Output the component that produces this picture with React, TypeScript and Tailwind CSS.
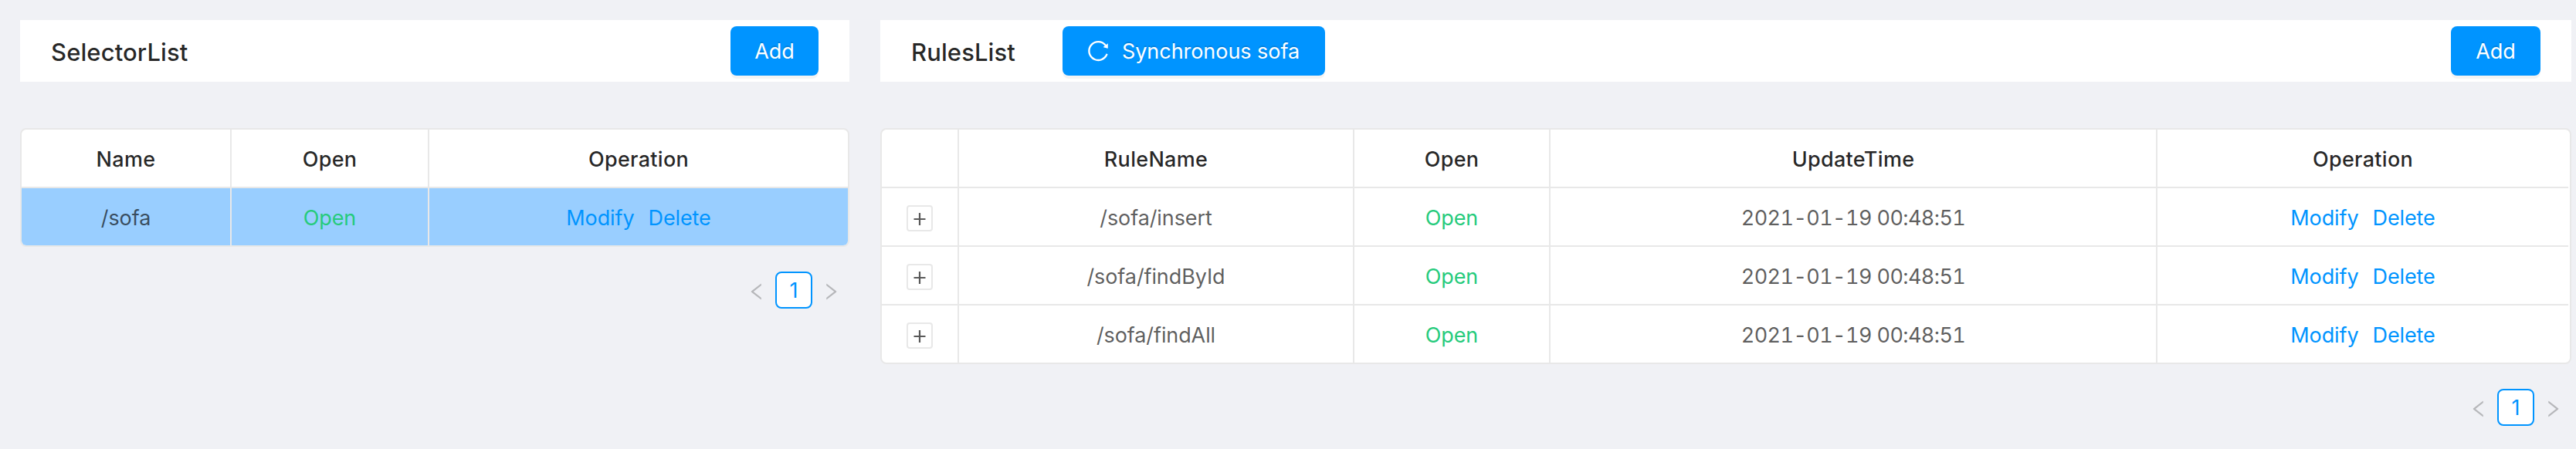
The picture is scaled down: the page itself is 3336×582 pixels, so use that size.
import React from 'react';
import { AiOutlineLeft, AiOutlineReload, AiOutlineRight } from 'react-icons/ai';

function PrimaryButton({ children, className }: { children: React.ReactNode; className: string }) {
  return (
    <button
      className={`flex h-16 items-center justify-center rounded-lg bg-[#0094ff] text-[27px] leading-none tracking-[-0.05px] text-white shadow-[0_4px_0_rgba(0,0,0,0.043)] [text-shadow:0_-2px_0_rgba(0,0,0,0.12)] ${className}`}
    >
      {children}
    </button>
  );
}

function Pagination() {
  return (
    <nav className="mt-8 flex h-12 items-center justify-end gap-2.5 pr-2.5 text-[#b6b7ba]">
      <AiOutlineLeft className="mt-1 size-7" />
      <span className="flex size-12 items-center justify-center rounded-lg border-2 border-[#0094ff] bg-white leading-none text-[#0094ff]">
        1
      </span>
      <AiOutlineRight className="mt-1 size-7" />
    </nav>
  );
}

const cell = 'flex items-center justify-center border-r-2 border-[#e8e8e8] pt-0.5';

function HeaderRow({ columns, grid }: { columns: string[]; grid: string }) {
  return (
    <div className={`grid h-[76px] border-b-2 border-[#e8e8e8] font-medium tracking-[0.3px] text-black/85 ${grid}`}>
      {columns.map((name, i) => (
        <div key={i} className={`${cell} last:border-r-0`}>
          {name}
        </div>
      ))}
    </div>
  );
}

function Operations() {
  return (
    <div className="flex items-center justify-center gap-[18px] pt-0.5 text-[#0094ff]">
      <a>Modify</a>
      <a>Delete</a>
    </div>
  );
}

const leftGrid = 'grid-cols-[272px_256px_1fr]';
const rightGrid = 'mr-0.5 grid-cols-[100px_512px_254px_786px_1fr]';
const rules = ['/sofa/insert', '/sofa/findById', '/sofa/findAll'];

export default function App() {
  return (
    <div className="flex h-[582px] w-[3336px] gap-10 bg-[#f0f1f5] pt-[26px] pl-[26px] font-[Inter,sans-serif] text-[27px] leading-none tracking-[-0.1px]">
      <section className="w-[1074px]">
        <header className="flex h-20 items-center justify-between bg-white px-10">
          <h3 className="pt-0.5 text-[31px] font-medium tracking-[0.1px] text-black/85">SelectorList</h3>
          <PrimaryButton className="w-[114px]">Add</PrimaryButton>
        </header>
        <div className="mt-[60px] overflow-hidden rounded-lg border-2 border-[#e8e8e8] bg-white">
          <HeaderRow columns={['Name', 'Open', 'Operation']} grid={leftGrid} />
          <div className={`grid h-[74px] bg-[#99ceff] ${leftGrid}`}>
            <div className={`${cell} text-black/65`}>/sofa</div>
            <div className={`${cell} text-[#26cb7c]`}>Open</div>
            <Operations />
          </div>
        </div>
        <Pagination />
      </section>

      <section className="w-[2190px]">
        <header className="flex h-20 items-center bg-white px-10">
          <h3 className="w-[196px] pt-0.5 text-[31px] font-medium tracking-[0.1px] text-black/85">RulesList</h3>
          <PrimaryButton className="w-[340px] gap-[15px] pr-[3px]">
            <AiOutlineReload className="size-8" />
            <span>Synchronous sofa</span>
          </PrimaryButton>
          <PrimaryButton className="ml-auto w-[116px]">Add</PrimaryButton>
        </header>
        <div className="mt-[60px] overflow-hidden rounded-lg border-2 border-[#e8e8e8] bg-white">
          <HeaderRow columns={['', 'RuleName', 'Open', 'UpdateTime', 'Operation']} grid={rightGrid} />
          {rules.map((rule) => (
            <div
              key={rule}
              className={`grid h-[76px] border-b-2 border-[#e8e8e8] text-black/65 last:h-[74px] last:border-b-0 ${rightGrid}`}
            >
              <div className={cell}>
                <span className="mt-0.5 flex size-[34px] items-center justify-center rounded-sm border-2 border-[#e8e8e8]">
                  <svg viewBox="0 0 16 16" className="mt-0.5 size-4" fill="none" stroke="#595959" strokeWidth="2.2">
                    <path d="M0.5 8h15M8 0v16" />
                  </svg>
                </span>
              </div>
              <div className={cell}>{rule}</div>
              <div className={`${cell} text-[#26cb7c]`}>Open</div>
              <div className={`${cell} tracking-[-0.6px] tabular-nums`}>2021-01-19 00:48:51</div>
              <Operations />
            </div>
          ))}
        </div>
        <Pagination />
      </section>
    </div>
  );
}
